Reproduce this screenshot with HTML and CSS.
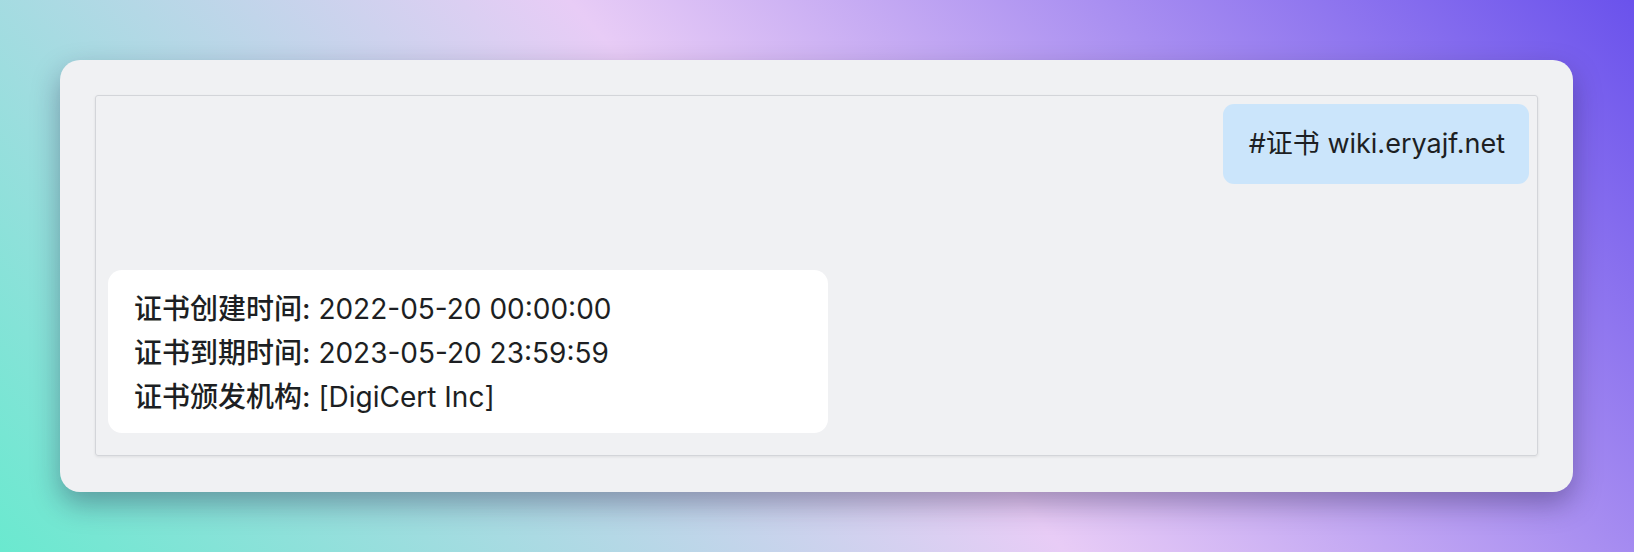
FILE: index.html
```html
<!DOCTYPE html>
<html lang="zh-CN">
<head>
<meta charset="utf-8">
<title>证书查询</title>
<link rel="stylesheet" href="styles.css">
</head>
<body>
  <main class="card">
    <section class="chat">
      <div class="msg msg-out">#证书 wiki.eryajf.net</div>
      <div class="msg msg-in">
        <div class="line"><span class="label">证书创建时间:</span> 2022-05-20 00:00:00</div>
        <div class="line"><span class="label">证书到期时间:</span> 2023-05-20 23:59:59</div>
        <div class="line"><span class="label">证书颁发机构:</span> [DigiCert Inc]</div>
      </div>
    </section>
  </main>
</body>
</html>
```
FILE: styles.css
```css
* { box-sizing: border-box; }
html, body { margin: 0; height: 100%; }
body {
  width: 1634px;
  height: 552px;
  padding: 60px 61px 60px 60px;
  background: linear-gradient(48deg, #6ae9cf 0%, #e8ccf6 50%, #6a52ec 100%);
  font-family: "Inter", "Noto Sans CJK SC", sans-serif;
  color: #1d1f23;
  overflow: hidden;
}
.card {
  height: 432px;
  padding: 35px;
  background: #f0f1f3;
  border-radius: 20px;
  box-shadow: 0 12px 28px rgba(30, 20, 60, 0.35);
}
.chat {
  height: 361px;
  border: 1px solid #d3d5d9;
  border-radius: 3px;
  box-shadow: 0 1px 3px rgba(0, 0, 0, 0.08);
  padding: 8px 8px 22px 12px;
  display: flex;
  flex-direction: column;
  justify-content: space-between;
  align-items: flex-start;
}
.msg-out {
  align-self: flex-end;
  font-size: 27px;
  background: #cbe5fb;
  line-height: 34px;
  padding: 23px 24px 23px 26px;
  border-radius: 11px;
  white-space: nowrap;
}
.msg-in {
  width: 720px;
  font-size: 28px;
  background: #ffffff;
  padding: 17px 26px 14px;
  border-radius: 14px;
}
.line {
  line-height: 44px;
  height: 44px;
  white-space: nowrap;
}
.label {
  font-weight: 500;
}
```
